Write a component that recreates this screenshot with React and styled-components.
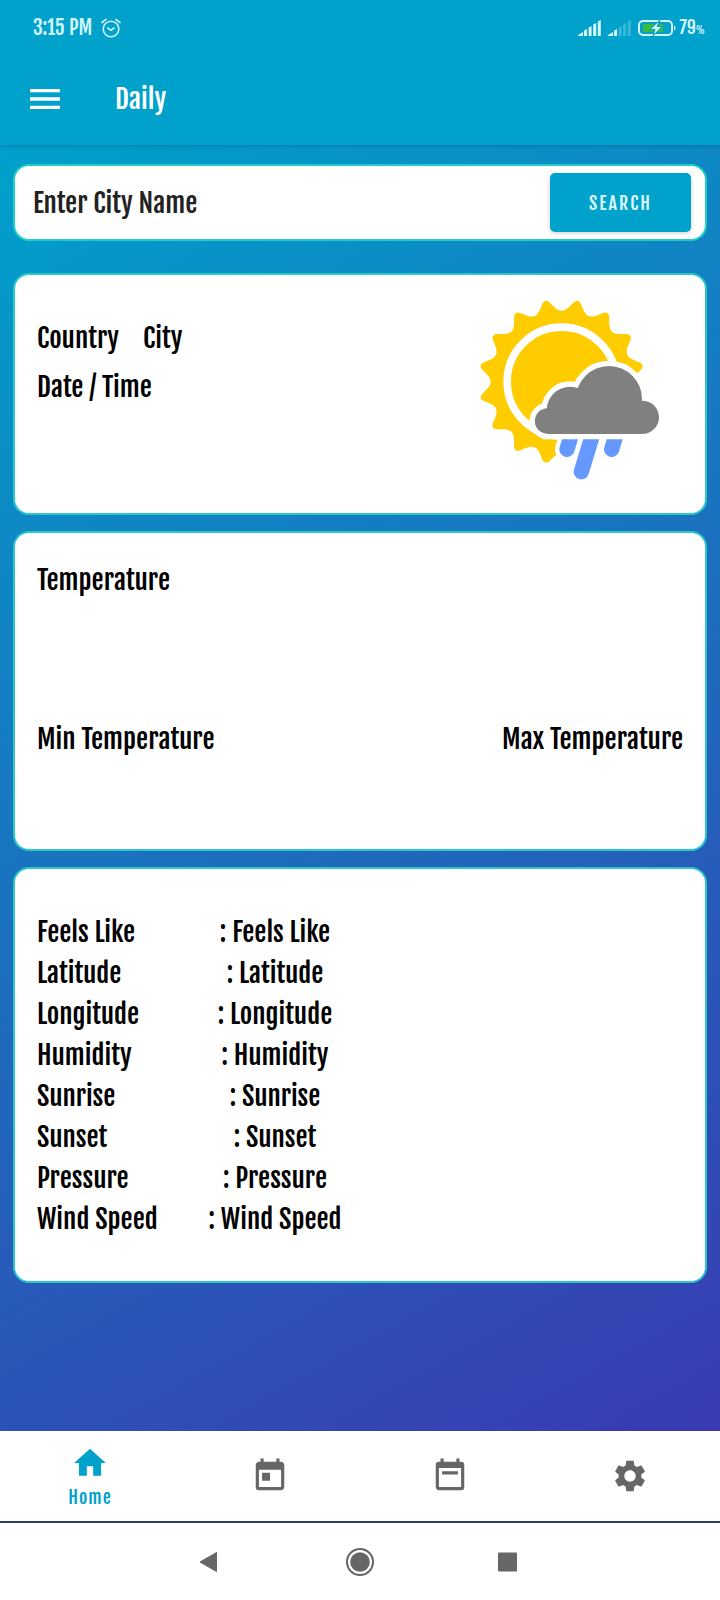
import React from "react";
import styled, { createGlobalStyle } from "styled-components";
import { MdHome, MdMenu, MdSettings, MdToday } from "react-icons/md";

const GlobalStyle = createGlobalStyle`
  * { box-sizing: border-box; }
  body {
    margin: 0;
    background: #fff;
    color: #000;
    font-family: "Fjalla One", "Roboto Condensed", "Open Sans Condensed", Lato, sans-serif;
    font-size: 27px;
    line-height: 40px;
  }
  button, input { font-family: inherit; border: 0; }
`;

const Screen = styled.div`
  min-height: 100vh;
  display: flex;
  flex-direction: column;
`;

const Header = styled.header`
  background: #00a1cb;
  color: #fff;
  position: relative;
  box-shadow: 0 1px 4px rgba(0, 60, 110, 0.35);
`;

const StatusBar = styled.div`
  display: flex;
  align-items: center;
  justify-content: space-between;
  height: 56px;
  padding: 0 15px 0 33px;
  color: #d2f6fc;
  line-height: 24px;
`;

const StatusGroup = styled.div`
  display: flex;
  align-items: center;
  gap: ${(p) => p.$gap}px;
`;

const Clock = styled.span`
  font-size: 20px;
`;

const Charge = styled.span`
  font-size: 18px;
`;

const Percent = styled.small`
  font-size: 10px;
`;

const AppBar = styled.div`
  display: flex;
  align-items: center;
  gap: 50px;
  height: 89px;
  padding: 0 25px 4px;
`;

const IconButton = styled.button`
  display: flex;
  padding: 0;
  background: none;
  color: inherit;
`;

const Title = styled.h1`
  margin: 0;
  font-size: 27px;
  font-weight: 400;
`;

const Content = styled.main`
  flex: 1;
  display: flex;
  flex-direction: column;
  gap: 16px;
  padding: 19px 13px;
  background: linear-gradient(151deg, #00a1cb, #3a3ab1);
`;

const Panel = styled.section`
  background: #fff;
  border: 2px solid #2cc8c8;
  border-radius: 16px;
`;

const SearchForm = styled.form`
  display: flex;
  align-items: center;
  height: 77px;
  margin-bottom: 16px;
  padding: 0 14px 0 18px;
  background: #fff;
  border: 2px solid #1fcfc6;
  border-radius: 16px;
`;

const CityInput = styled.input`
  flex: 1;
  min-width: 0;
  height: 60px;
  padding: 0;
  background: none;
  color: #222;
  font-size: 27px;
  outline: none;
  &::placeholder { color: #222; opacity: 1; }
`;

const SearchButton = styled.button`
  width: 141px;
  height: 59px;
  border-radius: 5px;
  background: #00a1cb;
  color: #d8f8fc;
  font-size: 18px;
  letter-spacing: 2px;
  box-shadow: 0 1px 4px rgba(0, 0, 0, 0.2);
`;

const PlacePanel = styled(Panel)`
  display: flex;
  justify-content: space-between;
  height: 242px;
  padding: 25px 45px 0 22px;
`;

const PlaceText = styled.div`
  display: flex;
  flex-direction: column;
  gap: 9px;
  padding-top: 18px;
`;

const PlaceLine = styled.div`
  display: flex;
  gap: 24px;
`;

const TemperaturePanel = styled(Panel)`
  display: flex;
  flex-direction: column;
  gap: 119px;
  height: 320px;
  padding: 27px 22px 0;
`;

const TemperatureRange = styled.div`
  display: flex;
  justify-content: space-between;
`;

const DetailsPanel = styled(Panel)`
  padding: 43px 22px 41px;
`;

const DetailTable = styled.table`
  border-collapse: collapse;
  line-height: 41px;
  white-space: nowrap;
`;

const DetailName = styled.th`
  width: 158px;
  padding: 0;
  font-weight: 400;
  text-align: left;
`;

const DetailValue = styled.td`
  width: 160px;
  padding: 0;
  text-align: center;
`;

const TabBar = styled.nav`
  display: grid;
  grid-template-columns: repeat(4, 1fr);
  height: 92px;
  border-bottom: 2px solid #303b70;
  background: #fff;
`;

const Tab = styled.a`
  display: flex;
  flex-direction: column;
  align-items: center;
  justify-content: center;
  gap: 3px;
  color: ${(p) => (p.$active ? "#00a1cb" : "#666")};
  font-size: 18px;
  line-height: 24px;
  letter-spacing: 1px;
  text-decoration: none;
`;

const SystemBar = styled.div`
  display: flex;
  align-items: center;
  justify-content: center;
  gap: 118px;
  height: 77px;
  background: #fff;
  color: #666;
`;

const AlarmIcon = () => (
  <svg width="20" height="20" viewBox="0 0 20 20" fill="none" stroke="currentColor" strokeWidth="1.6" strokeLinecap="round">
    <circle cx="10" cy="11" r="7.8" />
    <path d="M1 4.5 5 1.4M19 4.5l-4-3.1M6.8 10l3.2 2.3 3-2.3" />
  </svg>
);

const SignalIcon = ({ level }) => (
  <svg width="23" height="16" viewBox="0 0 23 16" fill="currentColor">
    <path d="M0 16v-1l5-3v4z" />
    {[9, 6, 3, 0].map((top, i) => (
      <path key={top} d={`M${6 + i * 4.6} 16V${top + 1.5}l3-1.500V16z`} opacity={i < level ? 1 : 0.28} />
    ))}
  </svg>
);

const BatteryIcon = () => (
  <svg width="38" height="18" viewBox="0 0 38 18">
    <rect x="5" y="5" width="20" height="8" fill="#38b944" />
    <rect x="1" y="2" width="33" height="14" rx="4" fill="none" stroke="#d2f6fc" strokeWidth="2" />
    <path d="M36 6.5c2 .5 2 4.500 0 5z" fill="#d2f6fc" />
    <path d="m22 1-10 9.500h5L15 17l9-9.500h-5z" fill="#d2f6fc" stroke="#00a1cb" strokeWidth="1" />
  </svg>
);

const CalendarIcon = () => (
  <svg width="38" height="38" viewBox="0 0 24 24" fill="currentColor">
    <path d="M19 3h-1V1h-2v2H8V1H6v2H5a2 2 0 0 0-2 2v14c0 1.100.9 2 2 2h14a2 2 0 0 0 2-2V5a2 2 0 0 0-2-2zm0 16H5V7h14zM7 9h10v2H7z" />
  </svg>
);

// Sixteen rounded rays alternate with shallow valleys around the disc.
const sunOutline = () => {
  const at = (radius, angle, along) => {
    const x = 305 + radius * Math.sin(angle) + along * Math.cos(angle);
    const y = 305 - radius * Math.cos(angle) + along * Math.sin(angle);
    return `${x.toFixed(1)} ${y.toFixed(1)}`;
  };
  const step = Math.PI / 16;
  let d = `M${at(213, 0, 0)}`;
  for (let i = 0; i < 16; i += 1) {
    const valley = i * 2 * step;
    const peak = valley + step;
    const next = peak + step;
    d += `C${at(213, valley, 22)} ${at(250, peak, -13)} ${at(247, peak, 0)}`;
    d += `C${at(250, peak, 13)} ${at(213, next, -22)} ${at(213, next, 0)}`;
  }
  return `${d}Z`;
};

const Cloud = (props) => (
  <g {...props}>
    <circle cx="263" cy="423" r="38.500" />
    <circle cx="331" cy="391" r="71" />
    <circle cx="447" cy="357" r="99" />
    <circle cx="547" cy="412" r="50" />
    <path d="M263 400H547V462H263z" />
  </g>
);

const WeatherIcon = () => (
  <svg width="180" height="180" viewBox="60 60 540 540" role="img" aria-label="Sun, cloud and rain">
    <path d={sunOutline()} fill="#fc0" />
    <circle cx="305" cy="305" r="163.500" fill="none" stroke="#fff" strokeWidth="23" />
    <path d="M300 470h290v90H288z" fill="#fff" />
    <g fill="none" strokeLinecap="round">
      <path d="M321 508 336 457" stroke="#fff" strokeWidth="72" />
      <path d="M321 508 336 457M364 575 400 457M455 508 470 457" stroke="#69f" strokeWidth="46" />
    </g>
    <Cloud fill="#fff" stroke="#fff" strokeWidth="32" />
    <Cloud fill="#808080" />
  </svg>
);

const details = [
  "Feels Like",
  "Latitude",
  "Longitude",
  "Humidity",
  "Sunrise",
  "Sunset",
  "Pressure",
  "Wind Speed",
];

export default function App() {
  return (
    <Screen>
      <GlobalStyle />
      <Header>
        <StatusBar>
          <StatusGroup $gap={9}>
            <Clock>3:15 PM</Clock>
            <AlarmIcon />
          </StatusGroup>
          <StatusGroup $gap={3}>
            <StatusGroup $gap={7}>
              <SignalIcon level={4} />
              <SignalIcon level={1} />
              <BatteryIcon />
            </StatusGroup>
            <Charge>79<Percent>%</Percent></Charge>
          </StatusGroup>
        </StatusBar>
        <AppBar>
          <IconButton type="button" aria-label="Menu"><MdMenu size={40} /></IconButton>
          <Title>Daily</Title>
        </AppBar>
      </Header>

      <Content>
        <SearchForm onSubmit={(event) => event.preventDefault()}>
          <CityInput type="text" aria-label="Enter City Name" placeholder="Enter City Name" />
          <SearchButton type="submit">SEARCH</SearchButton>
        </SearchForm>

        <PlacePanel>
          <PlaceText>
            <PlaceLine><span>Country</span><span>City</span></PlaceLine>
            <PlaceLine>Date / Time</PlaceLine>
          </PlaceText>
          <WeatherIcon />
        </PlacePanel>

        <TemperaturePanel>
          <div>Temperature</div>
          <TemperatureRange>
            <span>Min Temperature</span>
            <span>Max Temperature</span>
          </TemperatureRange>
        </TemperaturePanel>

        <DetailsPanel>
          <DetailTable>
            <tbody>
              {details.map((name) => (
                <tr key={name}>
                  <DetailName scope="row">{name}</DetailName>
                  <DetailValue>: {name}</DetailValue>
                </tr>
              ))}
            </tbody>
          </DetailTable>
        </DetailsPanel>
      </Content>

      <TabBar>
        <Tab href="#home" $active><MdHome size={38} />Home</Tab>
        <Tab href="#today" aria-label="Today"><MdToday size={38} /></Tab>
        <Tab href="#calendar" aria-label="Calendar"><CalendarIcon /></Tab>
        <Tab href="#settings" aria-label="Settings"><MdSettings size={38} /></Tab>
      </TabBar>

      <SystemBar>
        <IconButton type="button" aria-label="Back">
          <svg width="28" height="28" viewBox="0 0 28 28" fill="currentColor" stroke="currentColor" strokeLinejoin="round">
            <path d="M1 14 17.500 4.500v19z" />
          </svg>
        </IconButton>
        <IconButton type="button" aria-label="Home screen">
          <svg width="30" height="30" viewBox="0 0 30 30" fill="currentColor">
            <circle cx="15" cy="15" r="13" fill="none" stroke="currentColor" strokeWidth="2" />
            <circle cx="15" cy="15" r="9.800" />
          </svg>
        </IconButton>
        <IconButton type="button" aria-label="Recent apps">
          <svg width="28" height="28" viewBox="0 0 28 28" fill="currentColor">
            <rect x="5" y="4.500" width="19" height="19" rx="1" />
          </svg>
        </IconButton>
      </SystemBar>
    </Screen>
  );
}
